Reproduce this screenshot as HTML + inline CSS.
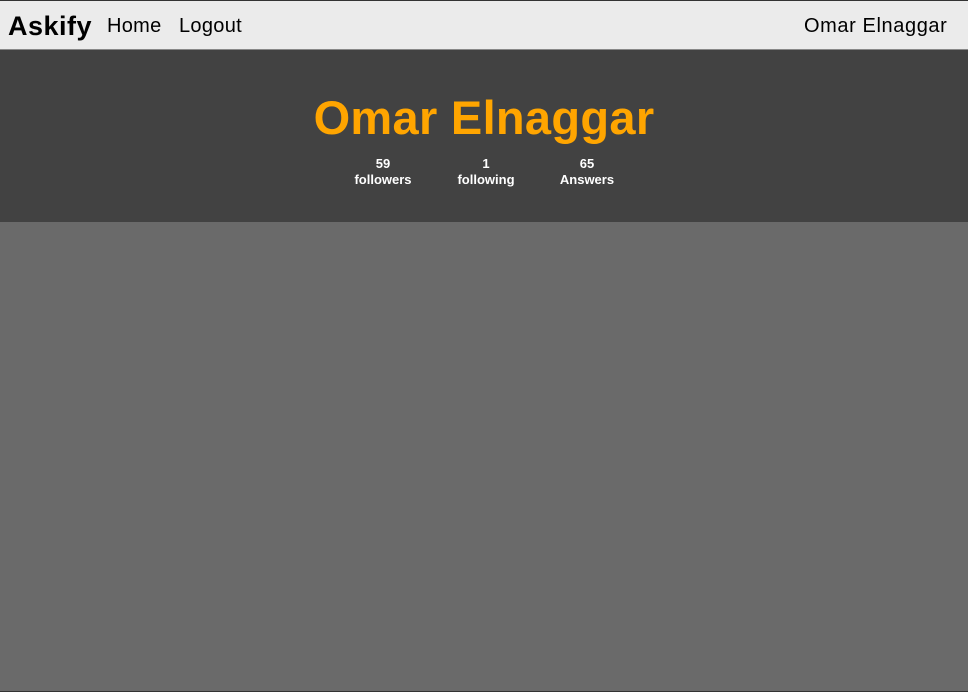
<!DOCTYPE html>
<html><head><style>
html,body{margin:0;padding:0;width:968px;height:692px;overflow:hidden;background:#6a6a6a;font-family:"Liberation Sans",Arial,sans-serif;}
.nav{position:absolute;top:0;left:0;width:968px;height:48px;background:#ebebeb;border-top:1px solid #333;border-bottom:1px solid #888;}
.nav span{position:absolute;top:14px;font-size:20px;color:#000;letter-spacing:0.3px;}
.hdr{position:absolute;top:50px;left:0;width:968px;height:172px;background:#424242;}
.name{position:absolute;top:40px;left:0;width:968px;text-align:center;color:#ffa500;font-weight:bold;font-size:47px;letter-spacing:0.3px;}
.st{position:absolute;top:106px;width:100px;text-align:center;color:#fff;font-weight:bold;font-size:13px;line-height:16px;}
.bot{position:absolute;top:691px;left:0;width:968px;height:1px;background:#333;}
</style></head><body>
<div class="nav">
<span style="left:8px;font-weight:bold;font-size:27px;top:10px;letter-spacing:0.5px">Askify</span>
<span style="left:107px">Home</span>
<span style="left:179px">Logout</span>
<span style="left:804px;letter-spacing:0.6px">Omar Elnaggar</span>
</div>
<div class="hdr">
<div class="name">Omar Elnaggar</div>
<div class="st" style="left:333px">59<br>followers</div>
<div class="st" style="left:436px">1<br>following</div>
<div class="st" style="left:537px">65<br>Answers</div>
</div>
<div class="bot"></div>
</body></html>
